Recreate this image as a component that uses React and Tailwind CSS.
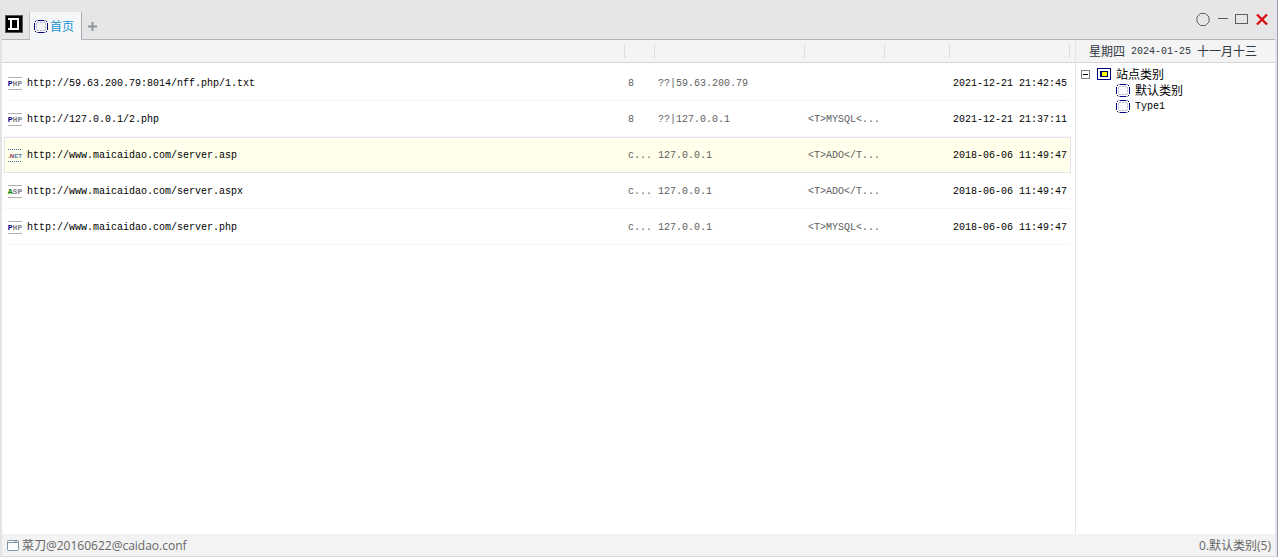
import { useState } from 'react'

const SITES = [
  { id: 1, kind: 'php', url: 'http://59.63.200.79:8014/nff.php/1.txt', note: '8', ip: '??|59.63.200.79', config: '', time: '2021-12-21 21:42:45' },
  { id: 2, kind: 'php', url: 'http://127.0.0.1/2.php', note: '8', ip: '??|127.0.0.1', config: '<T>MYSQL<...', time: '2021-12-21 21:37:11' },
  { id: 3, kind: 'net', url: 'http://www.maicaidao.com/server.asp', note: 'c...', ip: '127.0.0.1', config: '<T>ADO</T...', time: '2018-06-06 11:49:47' },
  { id: 4, kind: 'asp', url: 'http://www.maicaidao.com/server.aspx', note: 'c...', ip: '127.0.0.1', config: '<T>ADO</T...', time: '2018-06-06 11:49:47' },
  { id: 5, kind: 'php', url: 'http://www.maicaidao.com/server.php', note: 'c...', ip: '127.0.0.1', config: '<T>MYSQL<...', time: '2018-06-06 11:49:47' },
]

const KINDS = {
  php: {
    line: '#b0b0b0',
    font: "font-['Liberation_Mono',monospace] text-[8px] font-bold",
    parts: [['P', '#000080'], ['HP', '#808088']],
  },
  asp: {
    line: '#b0b0b0',
    font: "font-['Liberation_Mono',monospace] text-[8px] font-bold",
    parts: [['A', '#008000'], ['SP', '#808088']],
  },
  net: {
    line: '#3c6ea0',
    dash: '1 1',
    font: "font-['Liberation_Sans',sans-serif] text-[6px] font-bold",
    parts: [['.', '#d02020'], ['N', '#803858'], ['ET', '#4a7ca8']],
  },
}

export default function App() {
  const [selected, setSelected] = useState(3)
  const [open, setOpen] = useState(true)

  return (
    <div className="flex h-screen flex-col border-r border-l-2 border-l-[#e4e4e6] border-r-[#9c9cb0] bg-[#e4e4ea] pr-[2px] font-['Liberation_Mono','Noto_Sans_CJK_SC',monospace] text-[10px] text-black">
      <TitleBar />

      <main className="flex min-h-0 flex-1 bg-white">
        <section className="flex min-w-0 flex-1 flex-col">
          <ColumnBar />
          <div className="pt-[2px] pr-1 pl-[2px]">
            <table className="w-full table-fixed border-separate border-spacing-0">
              <colgroup>
                <col />
                <col className="w-[30px]" />
                <col className="w-[150px]" />
                <col className="w-[80px]" />
                <col className="w-[65px]" />
                <col className="w-[122px]" />
              </colgroup>
              <tbody>
                {SITES.map((site) => (
                  <SiteRow
                    key={site.id}
                    site={site}
                    active={site.id === selected}
                    onSelect={() => setSelected(site.id)}
                  />
                ))}
              </tbody>
            </table>
          </div>
        </section>

        <aside className="w-[200px] shrink-0 border-l border-[#e6e6ea]">
          <div className="flex h-[23px] items-center gap-[6px] border-b border-[#d6d6d8] bg-[#f4f4f5] pl-[13px] whitespace-nowrap text-[#303840]">
            <span className="pt-[3px] text-[12px]">星期四</span>
            <span>2024-01-25</span>
            <span className="pt-[3px] text-[12px]">十一月十三</span>
          </div>
          <ul className="pt-[3px] pl-[5px]">
            <li>
              <div className="flex h-4 items-center">
                <button
                  type="button"
                  aria-expanded={open}
                  onClick={() => setOpen(!open)}
                  className="mr-[7px] flex size-[9px] items-center justify-center border border-[#808078]"
                >
                  <span className="h-px w-[5px] bg-black" />
                </button>
                <RootIcon />
                <span className="ml-[5px] pt-[3px] text-[12px]">站点类别</span>
              </div>
              {open && (
                <ul className="pl-[35px]">
                  <li className="flex h-4 items-center gap-[5px]">
                    <ChipIcon />
                    <span className="pt-[3px] text-[12px]">默认类别</span>
                  </li>
                  <li className="flex h-4 items-center gap-[5px]">
                    <ChipIcon />
                    <span>Type1</span>
                  </li>
                </ul>
              )}
            </li>
          </ul>
        </aside>
      </main>

      <footer className="flex h-[23px] shrink-0 items-center justify-between border-b border-[#d8d8dc] bg-[#f3f3f3] pr-[4px] pl-[5px] font-['Open_Sans','Noto_Sans_CJK_SC',sans-serif] text-[12px] text-[#666]">
        <span className="flex items-center gap-[3px]">
          <WindowIcon />
          <span className="pt-[2px]">菜刀@20160622@caidao.conf</span>
        </span>
        <span className="pt-[2px]">0.默认类别(5)</span>
      </footer>
    </div>
  )
}

function TitleBar() {
  return (
    <header className="flex h-10 shrink-0 items-end justify-between border-b border-[#b4b4bc] bg-[#e6e6e6]">
      <div className="flex items-end">
        <div className="mr-[6px] mb-[6px] ml-[3px]">
          <AppLogo />
        </div>
        <button
          type="button"
          className="-mb-px flex h-[28px] items-center gap-[2px] border-x border-r-[#a8adb8] border-l-[#c4c6cc] bg-[#f5f6f7] pr-[7px] pl-1 font-['Noto_Sans_CJK_SC',sans-serif] text-[12px] text-[#1a93cf]"
        >
          <ChipIcon />
          <span className="whitespace-nowrap">首页</span>
        </button>
        <button type="button" aria-label="+" className="mb-[8px] ml-[6px]">
          <svg width="9" height="9" viewBox="0 0 9 9" className="block">
            <path d="M4.5 0v9M0 4.5h9" stroke="#8c969c" strokeWidth="2" />
          </svg>
        </button>
      </div>
      <WindowButtons />
    </header>
  )
}

function WindowButtons() {
  return (
    <div className="mb-[12px] flex items-center gap-[6px] pr-[6px]">
      <button type="button">
        <svg width="15" height="15" viewBox="0 0 15 15" className="block">
          <path
            d="M4.5 1.5h5l3.5 3.5v5l-3.5 3.5h-5l-3.5-3.5v-5z"
            fill="none"
            stroke="#606060"
          />
        </svg>
      </button>
      <button type="button">
        <svg width="12" height="15" viewBox="0 0 12 15" className="block">
          <path d="M1 6.5h10" stroke="#606060" />
        </svg>
      </button>
      <button type="button">
        <svg width="14" height="15" viewBox="0 0 14 15" className="block">
          <rect x=".5" y="2.5" width="12" height="9" fill="none" stroke="#606060" />
        </svg>
      </button>
      <button type="button">
        <svg width="14" height="15" viewBox="0 0 14 15" className="block">
          <path d="M2 2.5l10 10M12 2.5l-10 10" stroke="#d81010" strokeWidth="2.4" />
        </svg>
      </button>
    </div>
  )
}

function ColumnBar() {
  return (
    <div className="flex h-[23px] shrink-0 items-center border-b border-[#d6d6d8] bg-[#f4f4f5] pr-[5px]">
      <span className="h-[14px] flex-1 border-r border-[#dedee0]" />
      <span className="h-[14px] w-[30px] border-r border-[#dedee0]" />
      <span className="h-[14px] w-[150px] border-r border-[#dedee0]" />
      <span className="h-[14px] w-[80px] border-r border-[#dedee0]" />
      <span className="h-[14px] w-[65px] border-r border-[#dedee0]" />
      <span className="h-[14px] w-[120px] border-r border-[#dedee0]" />
    </div>
  )
}

function SiteRow({ site, active, onSelect }) {
  const cell = active
    ? 'h-9 border-y border-[#e4e4e8] bg-[#ffffeb] py-0 pr-0'
    : 'h-9 border-y border-t-transparent border-b-[#f6f6f6] py-0 pr-0'

  return (
    <tr onClick={onSelect} className="whitespace-nowrap text-[#606060]">
      <td className={`${cell} text-black ${active ? 'border-l pl-[3px]' : 'pl-1'}`}>
        <div className="flex items-center gap-[5px]">
          <KindIcon kind={site.kind} />
          {site.url}
        </div>
      </td>
      <td className={`${cell} pl-1`}>{site.note}</td>
      <td className={`${cell} pl-1`}>{site.ip}</td>
      <td className={`${cell} pl-1`}>{site.config}</td>
      <td className={cell} />
      <td className={`${cell} pl-1 text-black ${active ? 'border-r' : ''}`}>{site.time}</td>
    </tr>
  )
}

function KindIcon({ kind }) {
  const { line, dash, font, parts } = KINDS[kind]
  return (
    <svg width="14" height="13" viewBox="0 0 14 13" className="block shrink-0 overflow-visible">
      <path d="M0 .5h14M0 12.5h14" stroke={line} strokeDasharray={dash} />
      <text x="7" y="9" textAnchor="middle" className={font}>
        {parts.map(([letters, color]) => (
          <tspan key={letters} fill={color}>
            {letters}
          </tspan>
        ))}
      </text>
    </svg>
  )
}

function AppLogo() {
  return (
    <svg width="18" height="18" viewBox="0 0 18 18" className="block" shapeRendering="crispEdges">
      <rect width="18" height="18" fill="#505858" />
      <rect x="1" y="1" width="16" height="16" fill="#000" />
      <rect x="3" y="3" width="11" height="2" fill="#fff" />
      <rect x="3" y="13" width="11" height="2" fill="#fff" />
      <rect x="5" y="4" width="2" height="10" fill="#fff" />
      <rect x="12" y="4" width="2" height="10" fill="#fff" />
    </svg>
  )
}

function ChipIcon() {
  return (
    <svg width="14" height="13" viewBox="0 0 14 13" className="block shrink-0" shapeRendering="crispEdges">
      <path d="M2 .5h2M10 .5h2M2 12.5h2M10 12.5h2" stroke="#9c9cb8" />
      <path d="M4 .5h6M4 12.5h6M.5 3v7M13.5 3v7" stroke="#000080" />
      <path d="M1 1.5h1M12 1.5h1M1 11.5h1M12 11.5h1" stroke="#000080" />
      <path d="M3 2.5h8M3 10.5h8" stroke="#b4b4cc" strokeDasharray="2 1" />
      <path d="M2.5 3v7M11.5 3v7" stroke="#b4b4cc" strokeDasharray="2 1" />
    </svg>
  )
}

function RootIcon() {
  return (
    <svg width="14" height="12" viewBox="0 0 14 12" className="block shrink-0" shapeRendering="crispEdges">
      <rect x=".5" y=".5" width="13" height="11" fill="#fff" stroke="#000080" />
      <rect x="3" y="3" width="8" height="6" fill="#000060" />
      <rect x="5" y="4" width="5" height="4" fill="#ffff00" />
    </svg>
  )
}

function WindowIcon() {
  return (
    <svg width="12" height="11" viewBox="0 0 12 11" className="block shrink-0">
      <rect x=".5" y=".5" width="11" height="10" rx="1" fill="#fafcfd" stroke="#7c98a8" />
      <path d="M1 2.5h10" stroke="#7c98a8" />
      <path d="M7 1.5h3" stroke="#b8ccd6" />
    </svg>
  )
}
